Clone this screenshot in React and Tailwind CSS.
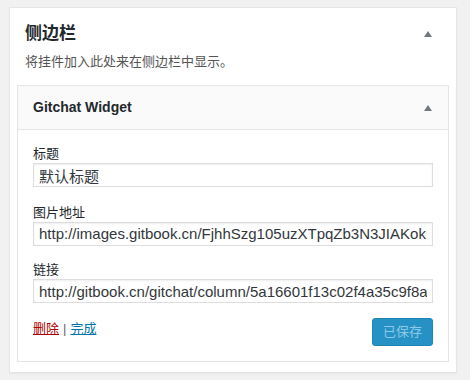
import React from 'react';

const font = { fontFamily: '"Liberation Sans", "Noto Sans CJK SC", sans-serif' };

const Arrow = () => (
  <svg width="10" height="8" viewBox="0 0 10 8" className="shrink-0">
    <polygon points="5,1 9,7 1,7" fill="#72777c" />
  </svg>
);

const Field = ({ label, value }) => (
  <div className="mb-[16px]">
    <div className="text-[13px] leading-[16px] text-[#23282d] mb-[1px]">{label}</div>
    <input
      readOnly
      value={value}
      className="w-full h-[24px] px-[5px] border border-[#ddd] bg-white text-[15px] text-[#32373c] outline-none shadow-[inset_0_1px_2px_rgba(0,0,0,0.07)]"
      style={font}
    />
  </div>
);

export default function App() {
  return (
    <div className="min-h-screen bg-[#f1f1f1] pt-[7px] pl-[9px] pr-[13px]" style={font}>
      <div className="bg-white border border-[#e5e5e5] shadow-[0_1px_1px_rgba(0,0,0,0.04)] pb-[10px]">
        <div className="flex items-center justify-between pl-[15px] pr-[23px] pt-[16px]">
          <h2 className="text-[17px] leading-[20px] font-bold text-[#23282d]">侧边栏</h2>
          <Arrow />
        </div>
        <p className="pl-[15px] mt-[9px] text-[13px] leading-[18px] text-[#555]">将挂件加入此处来在侧边栏中显示。</p>

        <div className="mx-[7px] mt-[14px] border border-[#e5e5e5]">
          <div className="h-[44px] bg-[#fafafa] border-b border-[#e5e5e5] flex items-center justify-between pl-[15px] pr-[15px]">
            <span className="text-[14px] font-bold text-[#23282d]">Gitchat Widget</span>
            <Arrow />
          </div>
          <div className="px-[15px] pt-[16px] pb-[15px]">
            <Field label="标题" value="默认标题" />
            <Field label="图片地址" value="http://images.gitbook.cn/FjhhSzg105uzXTpqZb3N3JIAKokKx" />
            <Field label="链接" value="http://gitbook.cn/gitchat/column/5a16601f13c02f4a35c9f8a1" />
            <div className="flex items-center justify-between -mt-[2px]">
              <div className="text-[13px] flex items-center gap-[4px] -mt-[6px]">
                <a className="text-[#a00] underline">删除</a>
                <span className="text-[#666]">|</span>
                <a className="text-[#0073aa] underline">完成</a>
              </div>
              <button className="h-[28px] px-[10px] rounded-[3px] bg-[#2591c4] text-[#8fc9e6] text-[13px] border border-[#1f86b8]" style={font}>
                已保存
              </button>
            </div>
          </div>
        </div>
      </div>
    </div>
  );
}
